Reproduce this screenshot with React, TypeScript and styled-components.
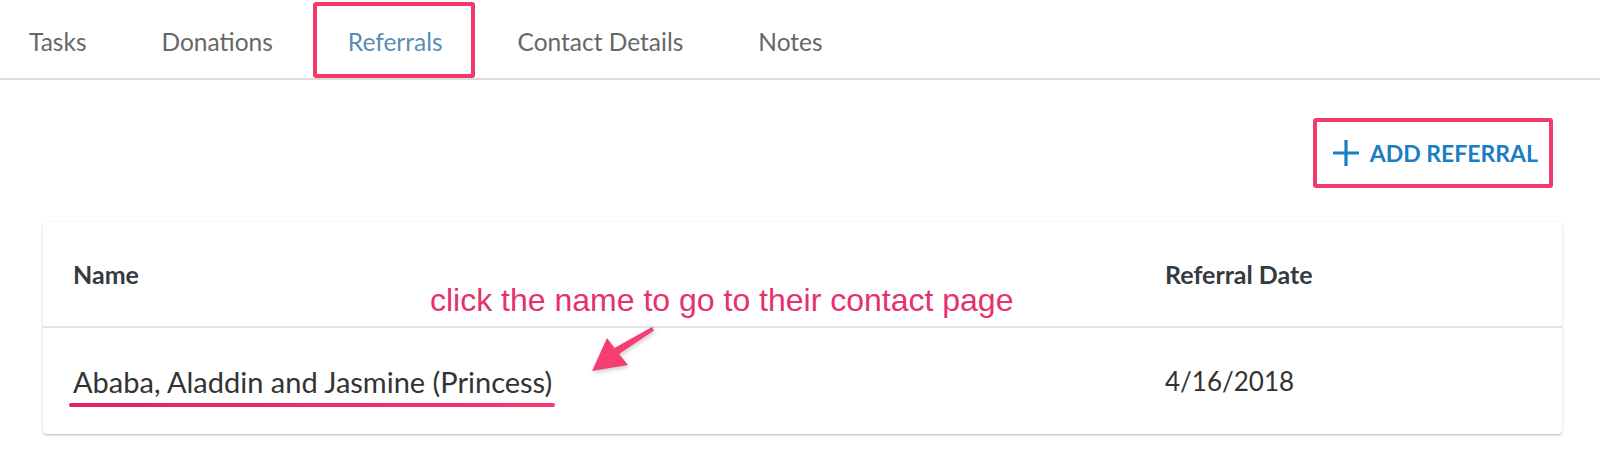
import React from "react";
import styled, { createGlobalStyle } from "styled-components";

const GlobalStyle = createGlobalStyle`
  html, body {
    margin: 0;
    padding: 0;
    background: #ffffff;
  }
  body {
    font-family: "Lato", "Open Sans", sans-serif;
    color: #333;
  }
`;

const PINK = "#f33a6d";

const Page = styled.div`
  position: relative;
  width: 1600px;
  height: 471px;
  overflow: hidden;
`;

const TabBar = styled.nav`
  display: flex;
  align-items: stretch;
  gap: 75px;
  height: 78px;
  padding-left: 29px;
  border-bottom: 2px solid #dcdcdc;
`;

const Tab = styled.div<{ $active?: boolean; $marked?: boolean }>`
  position: relative;
  display: flex;
  align-items: center;
  padding-top: 4px;
  font-size: 24.5px;
  color: ${(p) => (p.$active ? "#5a8db3" : "#676767")};

  ${(p) =>
    p.$marked &&
    `
    &::after {
      content: "";
      position: absolute;
      top: 2px;
      bottom: 0;
      left: -35px;
      right: -32px;
      border: 4.5px solid ${PINK};
      border-radius: 3px;
    }
  `}
`;

const Content = styled.main`
  padding: 0 38px 0 43px;
`;

const Toolbar = styled.div`
  display: flex;
  justify-content: flex-end;
  padding: 38px 9px 34px 0;
`;

const AddButton = styled.button`
  display: flex;
  align-items: center;
  gap: 11px;
  height: 70px;
  padding: 0 11px 0 16px;
  border: 4.5px solid ${PINK};
  border-radius: 3px;
  background: transparent;
  font-family: "Lato", sans-serif;
  font-weight: 700;
  font-size: 23px;
  color: #1a7ec2;
  cursor: pointer;
`;

const Card = styled.section`
  background: #fff;
  border-radius: 4px;
  box-shadow: 0 1px 3px rgba(0, 0, 0, 0.18), 0 2px 2px -1px rgba(0, 0, 0, 0.14);
`;

const Row = styled.div<{ $head?: boolean }>`
  display: grid;
  grid-template-columns: 1122px 1fr;
  align-items: center;
  height: ${(p) => (p.$head ? "104px" : "106px")};
  border-top: ${(p) => (p.$head ? "none" : "2px solid #e2e2e2")};
`;

const Cell = styled.div<{ $head?: boolean; $first?: boolean; $size?: number }>`
  padding-left: ${(p) => (p.$first ? "30px" : "0")};
  font-size: ${(p) => (p.$size ? p.$size : p.$head ? 25 : 29)}px;
  font-weight: ${(p) => (p.$head ? 700 : 400)};
  color: ${(p) => (p.$head ? "#343a3f" : "#333")};
`;

const NameLink = styled.a`
  position: relative;
  display: inline-block;
  color: #333;
  text-decoration: none;

  &::after {
    content: "";
    position: absolute;
    left: -4px;
    right: -3px;
    bottom: -8px;
    height: 4px;
    border-radius: 2px;
    background: linear-gradient(90deg, #e2216a, ${PINK});
  }
`;

const Note = styled.div`
  position: absolute;
  left: 430px;
  top: 282px;
  font-family: "Liberation Sans", Arial, sans-serif;
  font-size: 32px;
  line-height: 36px;
  color: #e5316c;
  white-space: nowrap;
`;

const Arrow = styled.svg`
  position: absolute;
  left: 583px;
  top: 321px;
  filter: drop-shadow(1px 2px 2px rgba(0, 0, 0, 0.2));
`;

const PlusIcon = () => (
  <svg width="26" height="26" viewBox="0 0 26 26">
    <path d="M13 0v26M0 13h26" stroke="#1a7ec2" strokeWidth="3.2" />
  </svg>
);

export default function App() {
  const tabs = ["Tasks", "Donations", "Referrals", "Contact Details", "Notes"];

  return (
    <Page>
      <GlobalStyle />
      <TabBar>
        {tabs.map((t) => (
          <Tab key={t} $active={t === "Referrals"} $marked={t === "Referrals"}>
            {t}
          </Tab>
        ))}
      </TabBar>
      <Content>
        <Toolbar>
          <AddButton>
            <PlusIcon />
            ADD REFERRAL
          </AddButton>
        </Toolbar>
        <Card>
          <Row $head>
            <Cell $head $first>Name</Cell>
            <Cell $head>Referral Date</Cell>
          </Row>
          <Row>
            <Cell $first>
              <NameLink href="#">Ababa, Aladdin and Jasmine (Princess)</NameLink>
            </Cell>
            <Cell $size={26}>4/16/2018</Cell>
          </Row>
        </Card>
      </Content>
      <Note>click the name to go to their contact page</Note>
      <Arrow width="78" height="58" viewBox="0 0 78 58">
        <polygon
          points="9,50 24,17 31.5,27 69,6 71,9.5 36,33 45,44"
          fill="#f53f72"
        />
      </Arrow>
    </Page>
  );
}
